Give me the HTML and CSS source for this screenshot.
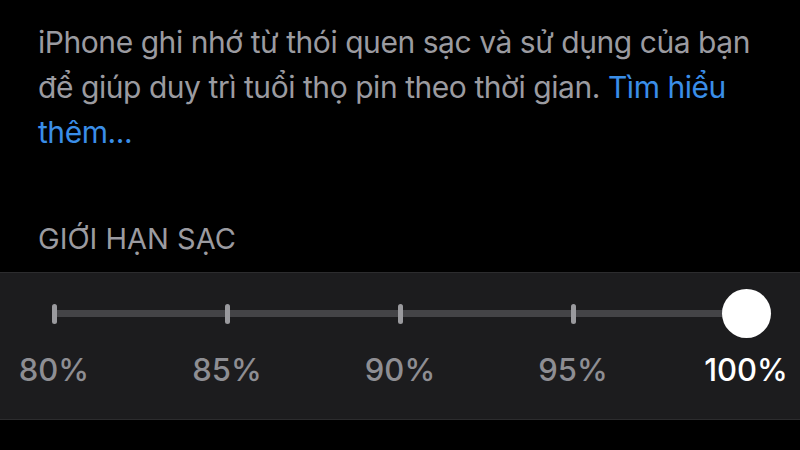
FILE: index.html
```html
<!DOCTYPE html>
<html lang="vi">
<head>
<meta charset="utf-8">
<link rel="stylesheet" href="styles.css">
</head>
<body>
<p class="desc">iPhone ghi nhớ từ thói quen sạc và sử dụng của bạn để giúp duy trì tuổi thọ pin theo thời gian. <a class="link" href="#">Tìm hiểu thêm...</a></p>
<h2 class="header">GIỚI HẠN SẠC</h2>
<section class="card">
  <div class="stops">
    <div class="stop"><div class="mark"><span class="tick"></span></div><span class="label">80%</span></div>
    <div class="stop"><div class="mark"><span class="tick"></span></div><span class="label">85%</span></div>
    <div class="stop"><div class="mark"><span class="tick"></span></div><span class="label">90%</span></div>
    <div class="stop"><div class="mark"><span class="tick"></span></div><span class="label">95%</span></div>
    <div class="stop"><div class="mark"><span class="knob"></span></div><span class="label active">100%</span></div>
  </div>
</section>
</body>
</html>
```
FILE: styles.css
```css
html, body {
  margin: 0;
  padding: 0;
  background: #000;
  width: 800px;
  height: 450px;
  overflow: hidden;
  font-family: Inter, "Noto Sans", "Liberation Sans", sans-serif;
}
.desc {
  margin: 20px 10px 0 38px;
  font-size: 30px;
  line-height: 45px;
  color: #9b9ba0;
  letter-spacing: -0.45px;
}
.link {
  color: #3a8ee8;
  text-decoration: none;
}
.header {
  margin: 66px 38px 0 38px;
  font-size: 29px;
  line-height: 36px;
  font-weight: 400;
  color: #9b9ba0;
}
.card {
  margin-top: 15px;
  height: 146px;
  background: #1c1c1e;
  border-top: 1px solid #2c2c2e;
  border-bottom: 1px solid #2c2c2e;
}
.stops {
  position: relative;
  display: flex;
  justify-content: space-between;
  padding: 0 54px;
}
.stops::before {
  content: "";
  position: absolute;
  left: 54px;
  right: 54px;
  top: 37px;
  height: 7px;
  background: #444447;
}
.stop {
  width: 0;
  display: flex;
  flex-direction: column;
  align-items: center;
  position: relative;
}
.mark {
  margin-top: 16px;
  height: 49px;
  width: 49px;
  display: flex;
  align-items: center;
  justify-content: center;
}
.tick {
  width: 5px;
  height: 20px;
  border-radius: 2.5px;
  background: #9a9a9e;
  flex: none;
}
.knob {
  width: 49px;
  height: 49px;
  border-radius: 50%;
  background: #fff;
  flex: none;
}
.label {
  margin-top: 14px;
  font-size: 31px;
  font-weight: 500;
  line-height: 36px;
  white-space: nowrap;
  color: #8e8e93;
}
.label.active {
  color: #fff;
}
```
